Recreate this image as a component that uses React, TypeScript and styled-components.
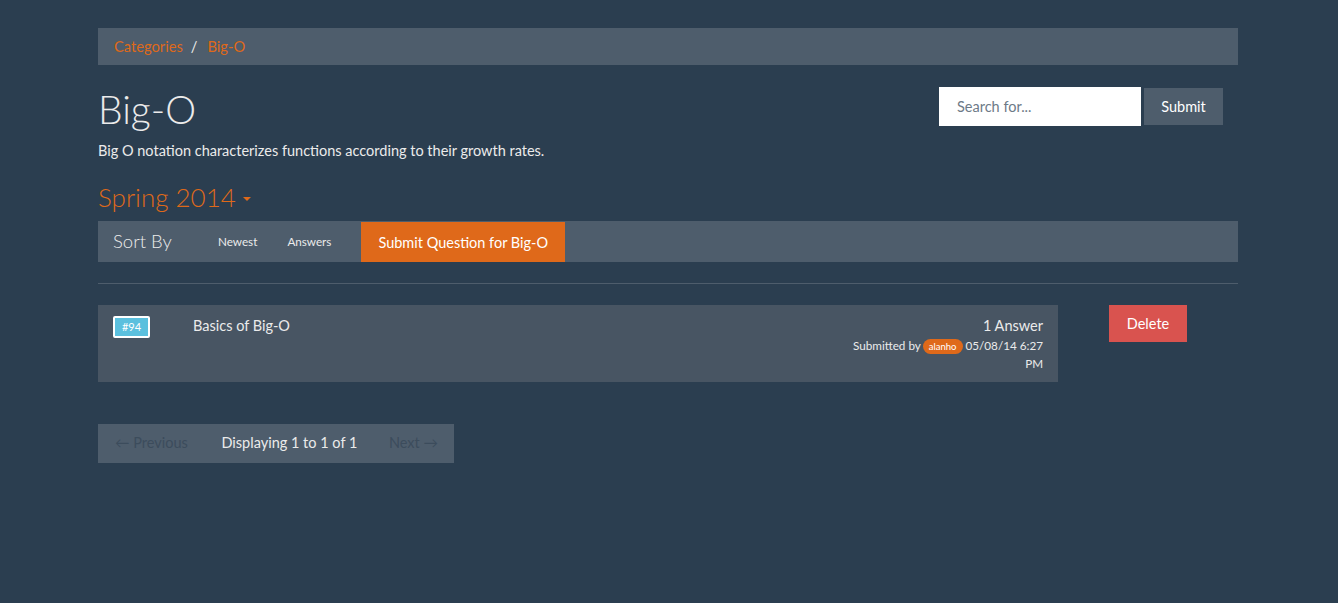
import React from "react";
import styled, { createGlobalStyle } from "styled-components";

const Global = createGlobalStyle`
  html, body { margin: 0; background: #2b3e50; }
  body {
    padding: 0 2px 0 0;
    font-family: Lato, "Open Sans", "Liberation Sans", sans-serif;
    font-size: 14.5px;
    line-height: 1.42857;
    color: #ebebeb;
  }
  * { box-sizing: border-box; }
`;

const Container = styled.div`
  width: 1140px;
  margin: 0 auto;
  padding-top: 28px;
  padding-bottom: 40px;
`;

const Breadcrumb = styled.ol`
  list-style: none;
  margin: 0;
  padding: 8px 16px;
  height: 37px;
  background: #4e5d6c;
  display: flex;
  align-items: center;
  font-size: 14.7px;
`;

const Crumb = styled.li`
  color: #df691a;
  & + &::before {
    content: "/";
    color: #ebebeb;
    padding: 0 10px 0 8px;
  }
`;

const Header = styled.div`
  display: flex;
  justify-content: space-between;
  align-items: flex-start;
  margin-top: 22px;
`;

const TitleBlock = styled.div`
  display: flex;
  flex-direction: column;
`;

const Title = styled.h1`
  margin: 0;
  font-size: 39px;
  font-weight: 300;
  line-height: 44px;
  color: #ebebeb;
`;

const Description = styled.p`
  margin: 10px 0 0;
  font-size: 14.5px;
  line-height: 20px;
`;

const SearchForm = styled.form`
  display: flex;
  gap: 3px;
  margin-right: 15px;
`;

const SearchInput = styled.input`
  width: 202px;
  height: 39px;
  border: none;
  padding: 0 18px;
  font-family: inherit;
  font-size: 14.5px;
  color: #4e5d6c;
  background: #fff;
  &::placeholder { color: #6d7a87; }
  outline: none;
`;

const Button = styled.button<{ $variant?: "default" | "primary" | "danger" }>`
  border: none;
  font-family: inherit;
  font-size: 14.5px;
  color: #fff;
  cursor: pointer;
  background: ${(p) =>
    p.$variant === "primary" ? "#df691a" : p.$variant === "danger" ? "#d9534f" : "#4e5d6c"};
`;

const SubmitButton = styled(Button)`
  width: 79px;
  height: 37px;
  margin-top: 1px;
`;

const Term = styled.div`
  margin-top: 20px;
  font-size: 26px;
  font-weight: 300;
  color: #df691a;
  line-height: 32px;
  display: flex;
  align-items: center;
  gap: 7px;
`;

const Caret = styled.span`
  width: 0;
  height: 0;
  border-left: 4px solid transparent;
  border-right: 4px solid transparent;
  border-top: 4px solid #df691a;
  margin-top: 3px;
`;

const SortBar = styled.div`
  margin-top: 8px;
  height: 41px;
  background: #4e5d6c;
  display: flex;
  align-items: center;
  padding-left: 15px;
`;

const SortLabel = styled.span`
  font-size: 18.5px;
  font-weight: 300;
  width: 105px;
`;

const SortLink = styled.a`
  font-size: 11.7px;
  color: #ebebeb;
  margin-right: 30px;
`;

const AskButton = styled(Button)`
  height: 40px;
  padding: 0 17px;
  align-self: flex-end;
`;

const Rule = styled.hr`
  border: none;
  border-top: 1px solid #4e5d6c;
  margin: 21px 0 21px;
`;

const QuestionRow = styled.div`
  display: flex;
  align-items: flex-start;
`;

const QuestionCard = styled.div`
  width: 960px;
  height: 77px;
  background: #485563;
  display: flex;
  padding: 11px 15px 0;
`;

const Badge = styled.span`
  display: inline-flex;
  align-items: center;
  justify-content: center;
  width: 37px;
  height: 22px;
  background: #5bc0de;
  border: 2px solid #fff;
  border-radius: 2px;
  font-size: 11px;
  color: #fff;
`;

const QuestionTitle = styled.a`
  margin-left: 43px;
  font-size: 14.5px;
  color: #ebebeb;
  flex: 1;
  line-height: 20px;
`;

const Meta = styled.div`
  width: 200px;
  text-align: right;
  line-height: 20px;
`;

const Answers = styled.div`
  font-size: 14.5px;
`;

const Submitted = styled.div`
  font-size: 11.7px;
  line-height: 18px;
`;

const UserLabel = styled.span`
  display: inline-block;
  background: #df691a;
  color: #fff;
  font-size: 9.5px;
  border-radius: 8px;
  padding: 0 6px;
  line-height: 15px;
  margin: 0 3px 0 2px;
`;

const DeleteButton = styled(Button)`
  margin-left: 51px;
  width: 78px;
  height: 37px;
`;

const Pager = styled.div`
  margin-top: 42px;
  width: 356px;
  height: 39px;
  background: #4e5d6c;
  display: flex;
  align-items: center;
  padding: 0 16px 0 17px;
  justify-content: space-between;
`;

const PagerLink = styled.span`
  color: #3c4c5c;
  font-size: 14.5px;
`;

const PagerText = styled.span`
  font-size: 14.5px;
  margin-left: 2px;
`;

export default function App() {
  return (
    <>
      <Global />
      <Container>
        <Breadcrumb>
          <Crumb>Categories</Crumb>
          <Crumb>Big-O</Crumb>
        </Breadcrumb>
        <Header>
          <TitleBlock>
            <Title>Big-O</Title>
            <Description>Big O notation characterizes functions according to their growth rates.</Description>
          </TitleBlock>
          <SearchForm onSubmit={(e) => e.preventDefault()}>
            <SearchInput placeholder="Search for..." />
            <SubmitButton type="submit">Submit</SubmitButton>
          </SearchForm>
        </Header>
        <Term>
          Spring 2014 <Caret />
        </Term>
        <SortBar>
          <SortLabel>Sort By</SortLabel>
          <SortLink>Newest</SortLink>
          <SortLink>Answers</SortLink>
          <AskButton $variant="primary">Submit Question for Big-O</AskButton>
        </SortBar>
        <Rule />
        <QuestionRow>
          <QuestionCard>
            <Badge>#94</Badge>
            <QuestionTitle>Basics of Big-O</QuestionTitle>
            <Meta>
              <Answers>1 Answer</Answers>
              <Submitted>
                Submitted by<UserLabel>alanho</UserLabel>05/08/14 6:27 PM
              </Submitted>
            </Meta>
          </QuestionCard>
          <DeleteButton $variant="danger">Delete</DeleteButton>
        </QuestionRow>
        <Pager>
          <PagerLink>← Previous</PagerLink>
          <PagerText>Displaying 1 to 1 of 1</PagerText>
          <PagerLink>Next →</PagerLink>
        </Pager>
      </Container>
    </>
  );
}
